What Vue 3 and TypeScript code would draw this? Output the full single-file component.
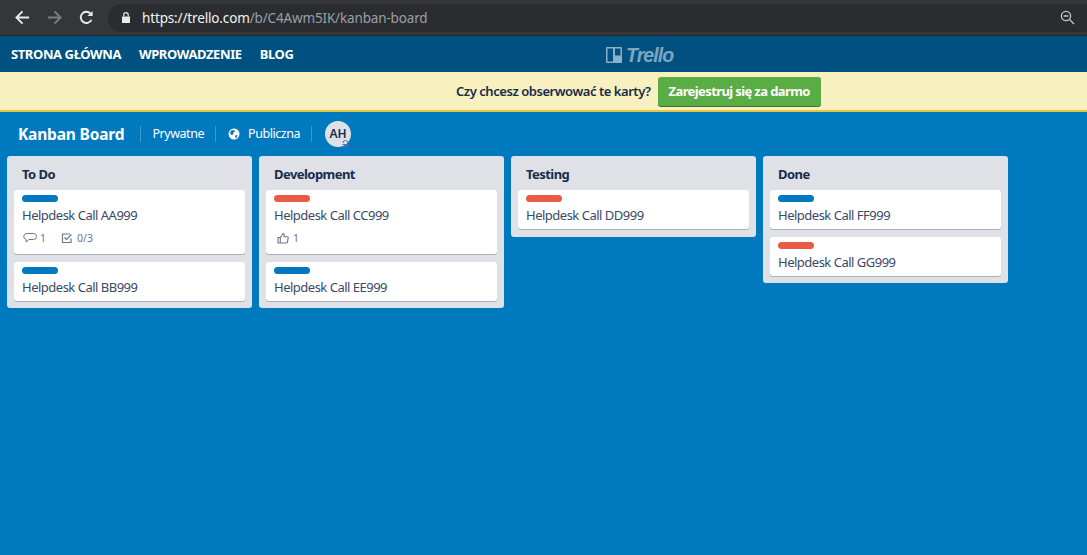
<script setup lang="ts">
interface Card { title: string; label: 'blue' | 'red'; badges?: 'comment' | 'like' }
interface List { name: string; cards: Card[] }
const lists: List[] = [
  { name: 'To Do', cards: [
    { title: 'Helpdesk Call AA999', label: 'blue', badges: 'comment' },
    { title: 'Helpdesk Call BB999', label: 'blue' },
  ] },
  { name: 'Development', cards: [
    { title: 'Helpdesk Call CC999', label: 'red', badges: 'like' },
    { title: 'Helpdesk Call EE999', label: 'blue' },
  ] },
  { name: 'Testing', cards: [
    { title: 'Helpdesk Call DD999', label: 'red' },
  ] },
  { name: 'Done', cards: [
    { title: 'Helpdesk Call FF999', label: 'blue' },
    { title: 'Helpdesk Call GG999', label: 'red' },
  ] },
]
</script>

<template>
  <div class="page">
    <div class="chrome">
      <div class="chrome-btns">
        <svg width="15" height="15" viewBox="0 0 16 16" fill="none" stroke="#e8eaed" stroke-width="2"><path d="M15 8H2M8 1.500 1.500 8 8 14.500"/></svg>
        <svg width="15" height="15" viewBox="0 0 16 16" fill="none" stroke="#7b7e81" stroke-width="2"><path d="M1 8h13M8 1.500 14.500 8 8 14.500"/></svg>
        <svg width="15" height="15" viewBox="0 0 16 16" fill="none" stroke="#e8eaed" stroke-width="2"><path d="M13.300 10.500A6 6 0 1 1 12.300 3.800"/><path d="M14.500 1v5.500H9" fill="#e8eaed" stroke="none"/></svg>
      </div>
      <div class="omnibox">
        <svg class="lock" width="8" height="11" viewBox="0 0 8 11"><path d="M0 4.500h8V11H0z" fill="#e8eaed"/><path d="M1.800 4.500V2.800a2.200 2.200 0 0 1 4.400 0v1.700" fill="none" stroke="#e8eaed" stroke-width="1.200"/></svg>
        <span class="url"><span class="url-main">https://trello.com</span>/b/C4Awm5IK/kanban-board</span>
        <svg class="zoom" width="15" height="15" viewBox="0 0 15 15" fill="none" stroke="#c4c7c9" stroke-width="1.300"><circle cx="6" cy="6" r="4.600"/><path d="M3.700 6h4.600M9.500 9.500 14 14"/></svg>
      </div>
    </div>

    <nav class="nav">
      <div class="nav-links">
        <a>STRONA GŁÓWNA</a>
        <a>WPROWADZENIE</a>
        <a>BLOG</a>
      </div>
      <div class="logo">
        <svg width="16" height="16" viewBox="0 0 16 16"><path d="M1 0h14a1 1 0 0 1 1 1v14a1 1 0 0 1-1 1H1a1 1 0 0 1-1-1V1a1 1 0 0 1 1-1zm.500 1.500v13h5.500v-13zm7.500 0v7h5.500v-7z" fill="#8cb0c8" fill-rule="evenodd"/></svg>
        <span class="logo-text">Trello</span>
      </div>
    </nav>

    <div class="banner">
      <span class="banner-text">Czy chcesz obserwować te karty?</span>
      <button class="signup">Zarejestruj się za darmo</button>
    </div>

    <main class="board">
      <header class="board-head">
        <h1>Kanban Board</h1>
        <span class="sep"></span>
        <span class="head-item">Prywatne</span>
        <span class="sep"></span>
        <span class="head-item globe-item">
          <svg width="12" height="12" viewBox="0 0 12 12"><circle cx="6" cy="6" r="5.500" fill="#fff"/><path d="M3 2.500 6 2l1 1.500-2 1.500.5 1.500L3.500 7 2 5zM7 7.500l2.500-.5L9 9.500 7.500 10z" fill="#0079bf"/></svg>
          Publiczna
        </span>
        <span class="sep"></span>
        <span class="avatar">AH
          <svg class="avatar-badge" width="7" height="7" viewBox="0 0 7 7" fill="none" stroke="#5e6db0" stroke-width="1"><path d="M1 3a2.500 2.500 0 0 1 5 0M.5 4.500h6M.5 6.500h6"/></svg>
        </span>
      </header>

      <section class="lists">
        <div v-for="list in lists" :key="list.name" class="list">
          <h2>{{ list.name }}</h2>
          <div class="cards">
            <article v-for="card in list.cards" :key="card.title" class="card">
              <div class="label" :class="card.label"></div>
              <div class="title">{{ card.title }}</div>
              <div v-if="card.badges === 'comment'" class="badges">
                <span class="badge">
                  <svg width="14" height="14" viewBox="0 0 14 14" fill="none" stroke="#6b778c" stroke-width="1"><path d="M3.500 2.500h7a2.500 2.500 0 0 1 0 6H6l-3 2.500V8.400a3 3 0 0 1 .5-5.900z"/></svg>1
                </span>
                <span class="badge">
                  <svg width="14" height="14" viewBox="0 0 14 14" fill="none" stroke="#6b778c" stroke-width="1.200"><path d="M11 7.500V11.500H2.500V3H10"/><path d="M4.500 6.500 6.500 8.500 11.500 3.500"/></svg>0/3
                </span>
              </div>
              <div v-else-if="card.badges === 'like'" class="badges like">
                <span class="badge">
                  <svg width="14" height="14" viewBox="0 0 14 14" fill="none" stroke="#6b778c" stroke-width="1.100"><path d="M2 6.500h2.300v5.500H2zM4.300 6.500 7 2.500c1 0 1.500.7 1.300 1.700L8 5.800h3.300c.7 0 1 .5.900 1.100l-.8 4.300c-.1.500-.4.800-.9.800H4.300"/></svg>1
                </span>
              </div>
            </article>
          </div>
        </div>
      </section>
    </main>
  </div>
</template>

<style>
html, body { margin: 0; padding: 0; background: #0079bf; }
</style>

<style scoped>
.page {
  width: 1087px;
  height: 555px;
  overflow: hidden;
  display: flex;
  flex-direction: column;
  font-family: "Noto Sans", "Open Sans", "Liberation Sans", sans-serif;
  color: #172b4d;
  background: #0079bf;
}
.chrome {
  height: 36px;
  box-sizing: border-box;
  background: #35363a;
  display: flex;
  align-items: center;
  padding: 0 12px 0 15px;
  gap: 16px;
  border-bottom: 1px solid #26282a;
}
.chrome-btns { display: flex; align-items: center; gap: 17px; margin-right: -2px; }
.omnibox {
  flex: 1;
  height: 28px;
  margin-right: -12px;
  background: #2a2c2f;
  border-radius: 14px 0 0 14px;
  display: flex;
  align-items: center;
  padding: 0 12px 0 14px;
}
.lock { margin-right: 12px; }
.url { font-size: 13.500px; color: #9aa0a6; white-space: nowrap; letter-spacing: -0.15px; }
.url-main { color: #f1f3f4; }
.zoom { margin-left: auto; }

.nav {
  height: 36px;
  background: #005180;
  position: relative;
  display: flex;
  align-items: center;
  padding-left: 11px;
}
.nav-links { display: flex; gap: 18px; }
.nav-links a {
  color: #fff;
  font-size: 13px;
  font-weight: 700;
  letter-spacing: -0.4px;
  line-height: 36px;
}
.logo {
  position: absolute;
  left: 606px;
  top: 11px;
  display: flex;
  align-items: center;
  gap: 4px;
  height: 16px;
}
.logo-text {
  font-family: "Liberation Sans", sans-serif;
  font-style: italic;
  font-weight: 700;
  font-size: 19.500px;
  color: #7fa6c1;
  line-height: 16px;
  letter-spacing: -0.9px;
}

.banner {
  height: 40px;
  box-sizing: border-box;
  background: #f8f1bf;
  border-bottom: 2px solid #e6c53f;
  display: flex;
  align-items: center;
  justify-content: flex-start;
  gap: 7px;
  padding-left: 456px;
}
.banner-text { font-size: 13px; font-weight: 600; color: #172b4d; letter-spacing: -0.45px; }
.signup {
  height: 29px;
  width: 163px;
  padding: 0;
  border: 0;
  border-radius: 3px;
  background: #5aac44;
  box-shadow: 0 1px 0 #3f6f21;
  color: #fff;
  font: 700 13px "Noto Sans", sans-serif;
  letter-spacing: -0.6px;
}

.board { flex: 1; background: #0079bf; }
.board-head {
  height: 44px;
  box-sizing: border-box;
  display: flex;
  align-items: center;
  padding-left: 18px;
  padding-bottom: 1px;
  color: #fff;
}
.board-head h1 {
  margin: 0;
  font-size: 15.500px;
  font-weight: 700;
  line-height: 20px;
  letter-spacing: -0.18px;
}
.sep { width: 1px; height: 16px; background: rgba(255,255,255,.24); margin: 0 11px 0 16px; }
.head-item { font-size: 12.500px; letter-spacing: -0.45px; color: #fff; display: flex; align-items: center; gap: 8px; }
.head-item + .sep { margin-left: 11px; }
.globe-item svg { margin-left: 1px; }
.avatar {
  position: relative;
  width: 26px;
  height: 26px;
  border-radius: 50%;
  background: #dfe1e6;
  color: #172b4d;
  font-size: 12px;
  font-weight: 600;
  display: flex;
  align-items: center;
  justify-content: center;
  margin-left: 2px;
}
.avatar-badge { position: absolute; right: 2px; bottom: 0; }

.lists { display: flex; align-items: flex-start; gap: 7px; padding-left: 7px; }
.list {
  width: 245px;
  min-height: 81px;
  box-sizing: border-box;
  background: #dfe1e6;
  border-radius: 3px;
  padding: 0 7px 7px;
}
.list h2 {
  margin: 0;
  height: 34px;
  line-height: 37px;
  padding-left: 8px;
  font-size: 13px;
  font-weight: 700;
  letter-spacing: -0.55px;
  color: #172b4d;
}
.cards { display: flex; flex-direction: column; gap: 8px; }
.card {
  background: #fff;
  border-radius: 3px;
  box-shadow: 0 1px 0 rgba(9,30,66,.25);
  padding: 5px 8px 0;
  min-height: 39px;
  box-sizing: border-box;
}
.label { width: 36px; height: 7px; border-radius: 4px; margin-bottom: 3px; }
.label.blue { background: #0079bf; }
.label.red { background: #eb5a46; }
.title { font-size: 13px; line-height: 20px; color: #3a4966; letter-spacing: -0.5px; height: 22px; }
.badges { display: flex; gap: 14px; height: 27px; padding-top: 0; box-sizing: border-box; align-items: center; margin-left: 1px; padding-bottom: 5px; }
.badges.like { margin-left: 2px; }
.badge { display: flex; align-items: center; gap: 3px; font-size: 10.500px; color: #6b778c; }
</style>
